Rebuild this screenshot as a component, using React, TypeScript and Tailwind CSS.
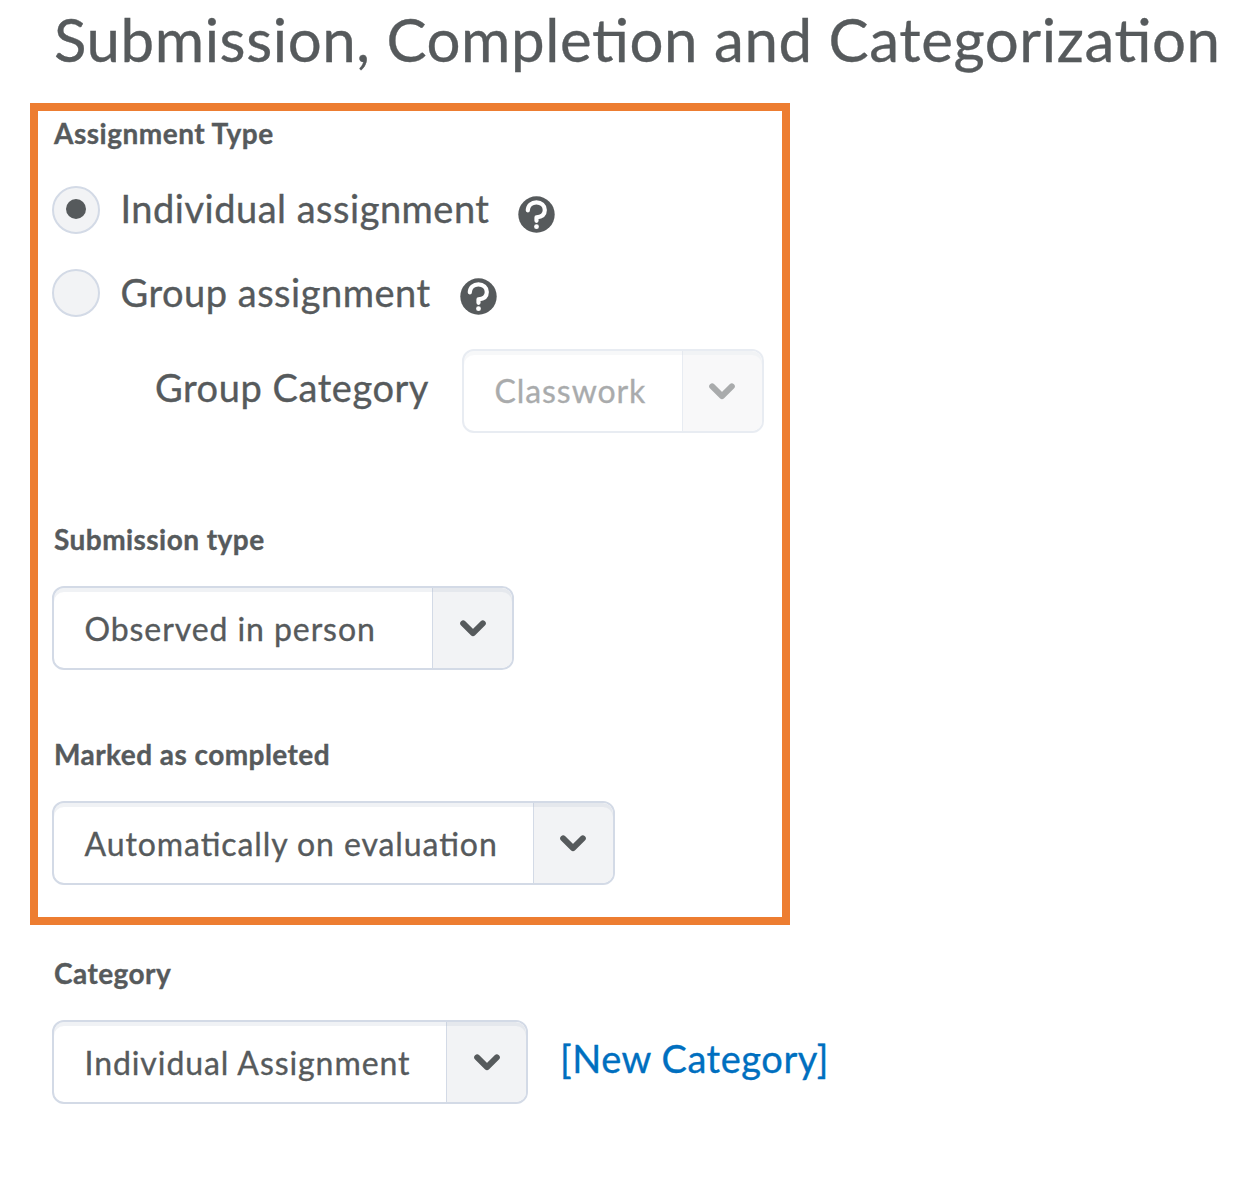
import { useState } from "react";
import clsx from "clsx";

type SelectProps = {
  value: string;
  className: string;
  disabled?: boolean;
};

function Chevron() {
  return (
    <svg width="26" height="17" viewBox="0 0 26 17" fill="none">
      <path
        d="M3.2 3.4 13 13.1l9.8-9.7"
        stroke="#565a5c"
        strokeWidth="6"
        strokeLinecap="round"
        strokeLinejoin="round"
      />
    </svg>
  );
}

function HelpIcon({ className }: { className?: string }) {
  return (
    <svg width="37" height="37" viewBox="0 0 37 37" fill="none" className={className}>
      <circle cx="18.5" cy="18.5" r="18.2" fill="#565a5c" />
      <path
        d="M9.8 14.4c.1-4.8 3.8-8.1 8.6-8.1 4.9 0 8.4 3.3 8.4 7.6 0 4.6-3.4 7-8.3 7.5v3.4"
        stroke="#fff"
        strokeWidth="4.2"
        strokeLinecap="round"
        strokeLinejoin="round"
      />
      <circle cx="18.5" cy="30.7" r="2.4" fill="#fff" />
    </svg>
  );
}

function Select({ value, className, disabled }: SelectProps) {
  return (
    <button
      type="button"
      disabled={disabled}
      className={clsx(
        "relative flex h-[84px] shrink-0 overflow-hidden rounded-xl border-2 border-[#d3dae6] bg-white text-left",
        disabled ? "leading-[80px] opacity-50" : "leading-[81px]",
        className
      )}
    >
      <span className="flex-1 whitespace-nowrap pl-[30.5px] text-[32px] leading-[inherit] tracking-[0.92px]">
        {value}
      </span>
      <span className="flex w-20 items-center justify-center border-l border-[#d3dae6] bg-[#f2f3f5] pt-px">
        <Chevron />
      </span>
      {/* inner top shadow runs over both halves */}
      <span className="pointer-events-none absolute inset-0 rounded-[10px] shadow-[inset_0_4px_0_rgba(181,189,204,0.2)]" />
    </button>
  );
}

function Radio({ checked, onClick }: { checked: boolean; onClick: () => void }) {
  return (
    <button
      type="button"
      role="radio"
      aria-checked={checked}
      onClick={onClick}
      className="flex size-12 shrink-0 items-center justify-center rounded-full border-2 border-[#d3dae6] bg-[#f2f3f5]"
    >
      {checked && <span className="mb-0.5 size-5 rounded-full bg-[#565a5c]" />}
    </button>
  );
}

export default function App() {
  const [type, setType] = useState<"individual" | "group">("individual");

  return (
    <main className="h-[1192px] w-[1250px] overflow-hidden bg-white pt-2 font-['Lato',sans-serif] text-[#565a5c] [font-feature-settings:'liga'] [-webkit-text-stroke:0.35px]">
      <h1 className="whitespace-nowrap pl-[54px] text-[60px] leading-[62px] tracking-[0.57px]">
        Submission, Completion and Categorization
      </h1>

      {/* Highlighted settings */}
      <section className="ml-[30px] mt-[33px] h-[822px] w-[760px] border-8 border-[#ed7d31] pl-[14px] pt-0.5">
        <h2 className="pl-0.5 text-[28px] font-bold leading-10 tracking-[0.5px]">Assignment Type</h2>

        <div className="mt-[33px] flex h-12">
          <Radio checked={type === "individual"} onClick={() => setType("individual")} />
          <span className="ml-[20.5px] text-[38px] leading-[44px] tracking-[0.5px]">Individual assignment</span>
          <HelpIcon className="ml-[28.5px] mt-[9.5px]" />
        </div>

        <div className="mt-[34.5px] flex h-12">
          <Radio checked={type === "group"} onClick={() => setType("group")} />
          <span className="ml-[20.5px] text-[38px] leading-[46px] tracking-[0.5px]">Group assignment</span>
          <HelpIcon className="ml-[29px] mt-[9.5px]" />
        </div>

        <div className="mt-[32.5px] flex">
          <span className="w-[307px] shrink-0 whitespace-nowrap pl-[103px] text-[38px] leading-[76px] tracking-[0.55px]">
            Group Category
          </span>
          <Select value="Classwork" className="ml-[103px] w-[301.5px]" disabled={type === "individual"} />
        </div>

        <h2 className="mt-[86px] pl-0.5 text-[28px] font-bold leading-10 tracking-[0.45px]">Submission type</h2>
        <Select value="Observed in person" className="mt-[27px] w-[462px]" />

        <h2 className="mt-16 pl-0.5 text-[28px] font-bold leading-10 tracking-[0.45px]">Marked as completed</h2>
        <Select value="Automatically on evaluation" className="mt-[27px] w-[562.5px]" />
      </section>

      <section className="mt-7 pl-[52px]">
        <h2 className="pl-0.5 text-[28px] font-bold leading-10 tracking-[0.45px]">Category</h2>
        <div className="mt-[27px] flex">
          <Select value="Individual Assignment" className="w-[476px]" />
          <a href="#" className="ml-8 text-[38px] leading-[76px] tracking-[0.55px] text-[#006fbf]">
            [New Category]
          </a>
        </div>
      </section>
    </main>
  );
}
